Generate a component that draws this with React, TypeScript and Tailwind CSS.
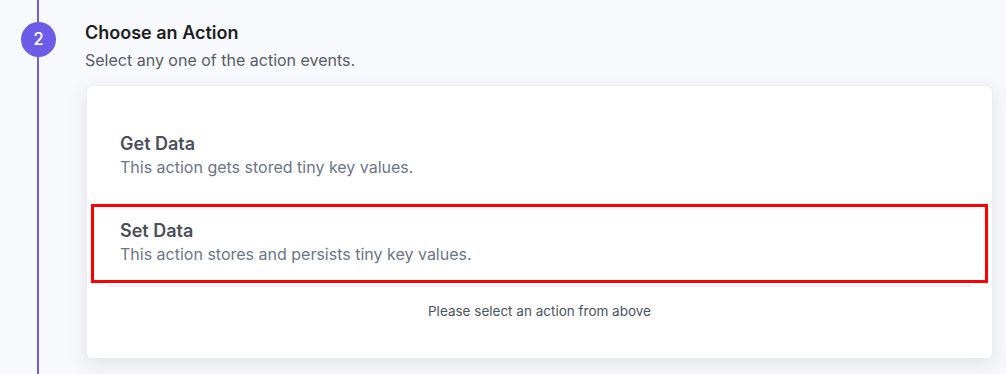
export default function App() {
  return (
    <div
      className="flex h-[374px] w-full overflow-hidden bg-[#f8f9fc]"
      style={{ fontFamily: 'Inter, "Noto Sans", sans-serif' }}
    >
      {/* Step rail */}
      <div className="relative w-[85px] shrink-0">
        <div className="absolute left-[37px] top-0 h-full w-[2px] bg-[#6c5ce7]" />
        <div className="absolute left-[21px] top-[22px] flex h-[35px] w-[35px] items-center justify-center rounded-full bg-[#6c5ce7] text-[17px] font-medium text-white">
          2
        </div>
      </div>

      {/* Step content */}
      <div className="flex-1 pr-[13px] pt-[21px]">
        <h2 className="text-[18px] font-semibold leading-[24px] text-[#1c1d21]">Choose an Action</h2>
        <p className="mt-[4px] text-[16px] leading-[22px] text-[#575c66]">Select any one of the action events.</p>

        <div className="ml-[1px] mt-[14px] h-[274px] rounded-[6px] border border-[#eceef2] bg-white shadow-[0_6px_20px_rgba(30,40,80,0.10)]">
          <div className="px-[4px] pt-[33px]">
            <div className="border-[3px] border-transparent px-[26px] pb-[15px] pt-[10px]">
              <div className="text-[18px] font-semibold leading-[24px] text-[#4a4f5c]">Get Data</div>
              <div className="text-[16px] leading-[22px] text-[#6b7688]">This action gets stored tiny key values.</div>
            </div>
            <div className="mt-[8px] border-[3px] border-[#ff0000] px-[26px] pb-[15px] pt-[12px]">
              <div className="text-[18px] font-semibold leading-[24px] text-[#4a4f5c]">Set Data</div>
              <div className="text-[16px] leading-[22px] text-[#6b7688]">This action stores and persists tiny key values.</div>
            </div>
            <div className="mx-[17px] mt-[2px] h-[2px] bg-[#eef0f4]" />
          </div>
          <p className="mt-[14px] text-center text-[13.5px] leading-[20px] text-[#4b5260]">Please select an action from above</p>
        </div>
      </div>
    </div>
  );
}
